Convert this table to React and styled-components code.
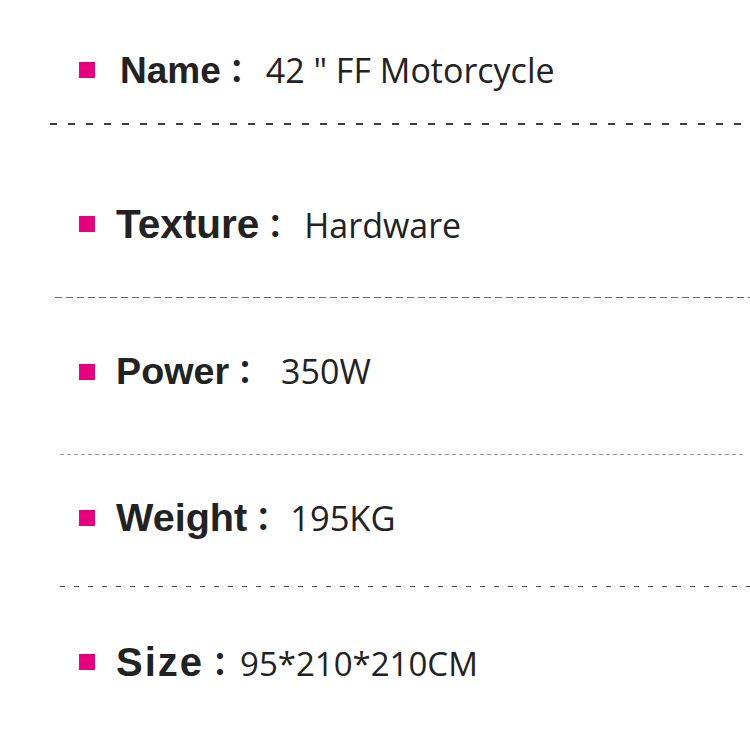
import styled, { createGlobalStyle } from "styled-components";

const GlobalStyle = createGlobalStyle`
  html, body {
    margin: 0;
    padding: 0;
    background: #ffffff;
  }
  body {
    width: 750px;
    height: 746px;
    overflow: hidden;
  }
`;

const Sheet = styled.div`
  display: flow-root;
  width: 750px;
  height: 746px;
  background: #ffffff;
  color: #222222;
`;

const Row = styled.div`
  display: flex;
  align-items: center;
  gap: ${(p) => p.$gap}px;
  height: 60px;
  margin-top: ${(p) => p.$top}px;
  padding-left: 79px;
`;

const Bullet = styled.span`
  flex: none;
  width: 16px;
  height: 16px;
  background: #e4007f;
`;

const Text = styled.div`
  display: flex;
  align-items: baseline;
  white-space: nowrap;
`;

const Label = styled.span`
  font-family: "Liberation Sans", Arial, sans-serif;
  font-weight: 700;
  font-size: ${(p) => p.$size}px;
  letter-spacing: ${(p) => p.$spacing || 0}px;
  line-height: 1;
  color: #222222;
`;

const Colon = styled.span`
  display: inline-block;
  width: 32px;
  text-align: center;
  font-family: "Noto Sans CJK JP", "Noto Sans CJK SC", sans-serif;
  font-weight: 700;
  font-size: 32px;
  line-height: 1;
  color: #222222;
`;

const Value = styled.span`
  margin-left: ${(p) => p.$gap}px;
  font-family: "Open Sans", "Noto Sans", sans-serif;
  font-weight: 400;
  font-size: ${(p) => p.$size}px;
  line-height: 1;
  color: #222222;
`;

const Divider = styled.div`
  height: ${(p) => p.$thick}px;
  margin-top: ${(p) => p.$top}px;
  margin-left: ${(p) => p.$left}px;
  margin-right: ${(p) => p.$right}px;
  background: repeating-linear-gradient(
    to right,
    ${(p) => p.$color} 0,
    ${(p) => p.$color} ${(p) => p.$dash}px,
    transparent ${(p) => p.$dash}px,
    transparent ${(p) => p.$period}px
  );
`;

const specs = [
  {
    label: "Name",
    value: '42 " FF Motorcycle',
    top: 40,
    rowGap: 25,
    labelSize: 37,
    valueSize: 34,
    gap: 13,
    divider: { top: 23, thick: 2, left: 50, right: 0, dash: 7, period: 18, color: "#3c3c3c" },
  },
  {
    label: "Texture",
    value: "Hardware",
    top: 69,
    rowGap: 21,
    labelSize: 40.5,
    valueSize: 34,
    gap: 13,
    divider: { top: 43, thick: 1, left: 55, right: 0, dash: 7, period: 11, color: "#6a6a6a" },
  },
  {
    label: "Power",
    value: "350W",
    top: 44,
    rowGap: 21,
    labelSize: 37.7,
    valueSize: 34,
    gap: 20,
    divider: { top: 52, thick: 1, left: 60, right: 5, dash: 4, period: 7, color: "#9a9a9a" },
  },
  {
    label: "Weight",
    value: "195KG",
    top: 33,
    rowGap: 21,
    labelSize: 39.6,
    valueSize: 34.5,
    gap: 11,
    divider: { top: 38, thick: 1, left: 60, right: 0, dash: 5, period: 14, color: "#505050" },
  },
  {
    label: "Size",
    value: "95*210*210CM",
    top: 45,
    rowGap: 21,
    labelSize: 40,
    labelSpacing: 2,
    valueSize: 33,
    gap: 4,
  },
];

const App = () => {
  return (
    <Sheet>
      <GlobalStyle />
      {specs.map((s) => (
        <div key={s.label}>
          <Row $top={s.top} $gap={s.rowGap}>
            <Bullet />
            <Text>
              <Label $size={s.labelSize} $spacing={s.labelSpacing}>
                {s.label}
              </Label>
              <Colon>：</Colon>
              <Value $size={s.valueSize} $gap={s.gap}>
                {s.value}
              </Value>
            </Text>
          </Row>
          {s.divider && (
            <Divider
              $top={s.divider.top}
              $thick={s.divider.thick}
              $left={s.divider.left}
              $right={s.divider.right}
              $dash={s.divider.dash}
              $period={s.divider.period}
              $color={s.divider.color}
            />
          )}
        </div>
      ))}
    </Sheet>
  );
};

export default App;
